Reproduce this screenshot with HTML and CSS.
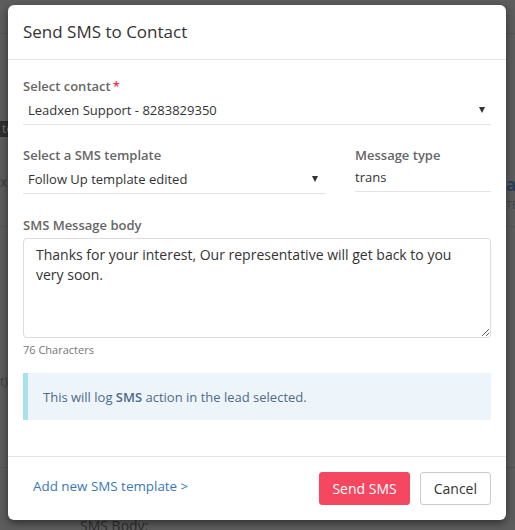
FILE: index.html
```html
<!DOCTYPE html>
<html lang="en">

<head>
  <meta charset="UTF-8" />
  <meta name="viewport" content="width=device-width, initial-scale=1.0" />
  <title>Send SMS to Contact</title>
  <link rel="stylesheet" href="styles.css">
</head>

<body>

  <!-- Page behind the overlay -->
  <div class="backdrop">
    <span class="bg-tag">te</span>
    <span class="bg-x">x</span>
    <span class="bg-paren">t)</span>
    <span class="bg-title">at</span>
    <span class="bg-sub">TE</span>
    <span class="bg-body">SMS Body:</span>
    <div class="bg-line bg-line-1"></div>
    <div class="bg-line bg-line-2"></div>
    <div class="bg-line bg-line-3"></div>
  </div>

  <!-- Modal -->
  <div class="modal">
    <div class="modal-header">
      <h2>Send SMS to Contact</h2>
    </div>

    <div class="modal-body">
      <div class="field">
        <label>Select contact<span class="req">*</span></label>
        <div class="select">
          <span>Leadxen Support - 8283829350</span>
          <i class="caret"></i>
        </div>
      </div>

      <div class="field-row">
        <div class="field">
          <label>Select a SMS template</label>
          <div class="select">
            <span>Follow Up template edited</span>
            <i class="caret"></i>
          </div>
        </div>
        <div class="field">
          <label>Message type</label>
          <div class="text-input">trans</div>
        </div>
      </div>

      <div class="field">
        <label>SMS Message body</label>
        <textarea class="message">Thanks for your interest, Our representative will get back to you very soon.</textarea>
        <div class="count">76 Characters</div>
      </div>

      <div class="info">This will log <b>SMS</b> action in the lead selected.</div>
    </div>

    <div class="modal-footer">
      <a href="#" class="add-link">Add new SMS template &gt;</a>
      <div class="actions">
        <button class="btn btn-send">Send SMS</button>
        <button class="btn btn-cancel">Cancel</button>
      </div>
    </div>
  </div>

</body>

</html>
```

FILE: styles.css
```css
* {
  margin: 0;
  padding: 0;
  box-sizing: border-box;
}

body {
  font-family: 'Open Sans', 'DejaVu Sans', sans-serif;
  background: #5d5d5d;
  width: 515px;
  height: 530px;
  overflow: hidden;
  padding: 5px 0 0 8px;
  position: relative;
}

/* faint page under the overlay */
.backdrop {
  position: absolute;
  inset: 0;
  color: #333;
  font-size: 14px;
  line-height: 16px;
}

.backdrop span {
  position: absolute;
}

.bg-tag {
  left: 0;
  top: 121px;
  background: #2e2e2e;
  color: #777;
  padding: 0 2px;
  font-size: 12px;
}

.bg-x {
  left: 0;
  top: 174px;
  color: #3d3d3d;
}

.bg-paren {
  left: 0;
  top: 374px;
  color: #3d3d3d;
  font-size: 12px;
}

.bg-title {
  left: 506px;
  top: 176px;
  font-weight: 700;
  font-size: 17px;
  line-height: 18px;
  color: #2c3e55;
}

.bg-sub {
  left: 506px;
  top: 199px;
  font-size: 11px;
  line-height: 12px;
  color: #444;
}

.bg-body {
  left: 80px;
  top: 518px;
  color: #2e2e2e;
}

.bg-line {
  position: absolute;
  left: 0;
  right: 0;
  height: 1px;
  background: #555;
}

.bg-line-1 { top: 33px; }
.bg-line-2 { top: 226px; }
.bg-line-3 { top: 467px; }

.modal {
  position: relative;
  width: 498px;
  background: #fff;
  border-radius: 6px;
  box-shadow: 0 3px 9px rgba(0, 0, 0, 0.5);
}

.modal-header {
  padding: 15px;
  border-bottom: 1px solid #e5e5e5;
}

.modal-header h2 {
  font-size: 17px;
  font-weight: 400;
  line-height: 24px;
  color: #333;
}

.modal-body {
  padding: 17px 15px 36px;
}

.field label {
  display: block;
  font-size: 13px;
  font-weight: 600;
  line-height: 18px;
  color: #666;
}

.req {
  color: #e8334f;
  margin-left: 2px;
}

.select {
  display: flex;
  justify-content: space-between;
  align-items: center;
  height: 30px;
  padding: 0 6px 0 5px;
  border-bottom: 1px solid #e3e3e3;
  font-size: 13px;
  color: #333;
}

.caret {
  width: 0;
  height: 0;
  border-left: 3.5px solid transparent;
  border-right: 3.5px solid transparent;
  border-top: 6px solid #333;
}

.field-row {
  display: grid;
  grid-template-columns: 303px 1fr;
  gap: 29px;
  margin-top: 21px;
}

.field-row .select {
  padding-right: 8px;
}

.text-input {
  height: 28px;
  line-height: 26px;
  border-bottom: 1px solid #e3e3e3;
  font-size: 13px;
  color: #333;
}

.field-row + .field {
  margin-top: 22px;
}

.message {
  display: block;
  width: 100%;
  height: 100px;
  margin-top: 4px;
  padding: 6px 12px;
  border: 1px solid #ddd;
  border-radius: 4px;
  font-family: inherit;
  font-size: 14px;
  line-height: 20px;
  color: #333;
  resize: vertical;
}

.count {
  margin-top: 4px;
  font-size: 11px;
  line-height: 16px;
  color: #777;
}

.info {
  margin-top: 15px;
  padding: 16px 15px 14px;
  background: #edf5fb;
  border-left: 5px solid #a6e1ec;
  font-size: 13px;
  line-height: 17px;
  color: #4e6a88;
}

.info b {
  font-weight: 600;
}

.modal-footer {
  display: flex;
  justify-content: space-between;
  align-items: center;
  padding: 15px;
  border-top: 1px solid #e5e5e5;
}

.add-link {
  margin: 0 0 6px 10px;
  font-size: 13.4px;
  color: #3a78b8;
  text-decoration: none;
}

.actions {
  display: flex;
  gap: 10px;
}

.btn {
  height: 33px;
  padding: 0 12px;
  border-radius: 3px;
  font-family: inherit;
  font-size: 14px;
  cursor: pointer;
}

.btn-send {
  background: #f5475f;
  border: 1px solid #f5475f;
  color: #fff;
}

.btn-cancel {
  background: #fff;
  border: 1px solid #ccc;
  color: #333;
  padding: 0 13px;
}
```
